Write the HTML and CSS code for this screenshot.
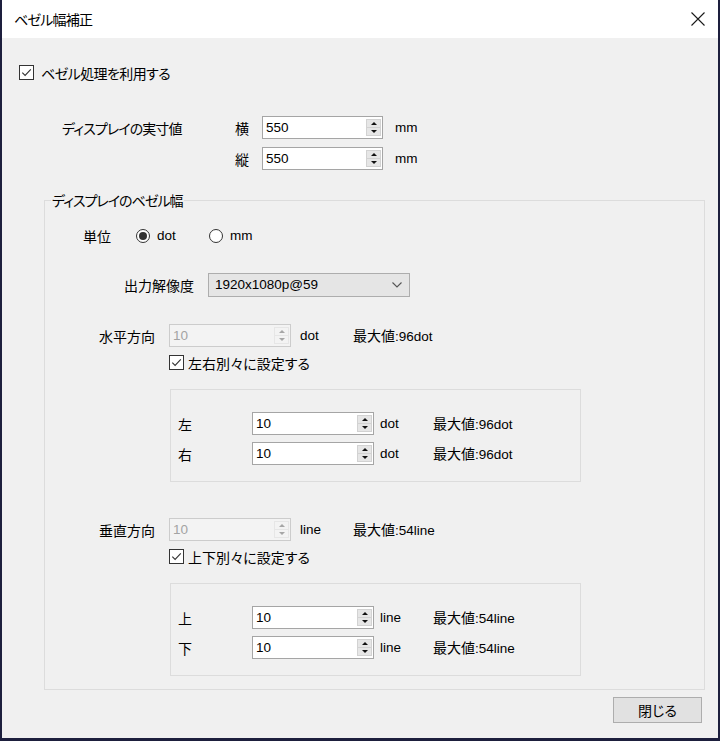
FILE: index.html
```html
<!DOCTYPE html>
<html lang="ja">
<head>
<meta charset="utf-8">
<title>ベゼル幅補正</title>
<link rel="stylesheet" href="styles.css">
</head>
<body>
<div class="window">
  <div class="titlebar">
    <span class="title">ベゼル幅補正</span>
    <svg class="close" width="14" height="14" viewBox="0 0 14 14"><path d="M0.5 0.5L13.5 13.5M13.5 0.5L0.5 13.5" stroke="#1a1a1a" stroke-width="1.1" fill="none"/></svg>
  </div>
  <div class="content">
    <div class="use-row">
      <span class="cb"><svg viewBox="0 0 13 13"><path d="M2.3 6.6L5.1 9.4L10.8 3.4" stroke="#333" stroke-width="1.1" fill="none"/></svg></span>
      <span class="kana-a">ベゼル処理を利用する</span>
    </div>

    <div class="real-size">
      <div class="rs-label">ディスプレイの実寸値</div>
      <div class="rs-fields">
        <div class="field-row">
          <span class="axis">横</span>
          <div class="spin w121"><span class="val">550</span><span class="spin-btns"><span class="up"></span><span class="down"></span></span></div>
          <span class="en unit-rs">mm</span>
        </div>
        <div class="field-row">
          <span class="axis">縦</span>
          <div class="spin w121"><span class="val">550</span><span class="spin-btns"><span class="up"></span><span class="down"></span></span></div>
          <span class="en unit-rs">mm</span>
        </div>
      </div>
    </div>

    <div class="group">
      <div class="legend">ディスプレイのベゼル幅</div>

      <div class="unit-row">
        <span class="unit-label">単位</span>
        <span class="radio-opt first"><span class="radio on"></span><span class="en">dot</span></span>
        <span class="radio-opt"><span class="radio"></span><span class="en">mm</span></span>
      </div>

      <div class="res-row">
        <span class="res-label">出力解像度</span>
        <div class="combo">
          <span class="en">1920x1080p@59</span>
          <svg width="10" height="6" viewBox="0 0 10 6"><path d="M0.5 0.5L5 5L9.5 0.5" stroke="#555" stroke-width="1.1" fill="none"/></svg>
        </div>
      </div>

      <div class="axis-row">
        <span class="axis-label">水平方向</span>
        <div class="spin w122 disabled"><span class="val">10</span><span class="spin-btns"><span class="up"></span><span class="down"></span></span></div>
        <span class="en unit-ax">dot</span>
        <span class="max">最大値<span class="en">:96dot</span></span>
      </div>

      <div class="sub-check">
        <span class="cb"><svg viewBox="0 0 13 13"><path d="M2.3 6.6L5.1 9.4L10.8 3.4" stroke="#333" stroke-width="1.1" fill="none"/></svg></span>
        <span>左右別々に設定する</span>
      </div>

      <div class="inner">
        <div class="inner-row">
          <span class="inner-label">左</span>
          <div class="spin w122"><span class="val">10</span><span class="spin-btns"><span class="up"></span><span class="down"></span></span></div>
          <span class="en unit-in">dot</span>
          <span class="max">最大値<span class="en">:96dot</span></span>
        </div>
        <div class="inner-row">
          <span class="inner-label">右</span>
          <div class="spin w122"><span class="val">10</span><span class="spin-btns"><span class="up"></span><span class="down"></span></span></div>
          <span class="en unit-in">dot</span>
          <span class="max">最大値<span class="en">:96dot</span></span>
        </div>
      </div>

      <div class="axis-row v">
        <span class="axis-label">垂直方向</span>
        <div class="spin w122 disabled"><span class="val">10</span><span class="spin-btns"><span class="up"></span><span class="down"></span></span></div>
        <span class="en unit-ax">line</span>
        <span class="max">最大値<span class="en">:54line</span></span>
      </div>

      <div class="sub-check">
        <span class="cb"><svg viewBox="0 0 13 13"><path d="M2.3 6.6L5.1 9.4L10.8 3.4" stroke="#333" stroke-width="1.1" fill="none"/></svg></span>
        <span>上下別々に設定する</span>
      </div>

      <div class="inner">
        <div class="inner-row">
          <span class="inner-label">上</span>
          <div class="spin w122"><span class="val">10</span><span class="spin-btns"><span class="up"></span><span class="down"></span></span></div>
          <span class="en unit-in">line</span>
          <span class="max">最大値<span class="en">:54line</span></span>
        </div>
        <div class="inner-row">
          <span class="inner-label">下</span>
          <div class="spin w122"><span class="val">10</span><span class="spin-btns"><span class="up"></span><span class="down"></span></span></div>
          <span class="en unit-in">line</span>
          <span class="max">最大値<span class="en">:54line</span></span>
        </div>
      </div>
    </div>

    <div class="footer">
      <button class="btn" type="button">閉じる</button>
    </div>
  </div>
</div>
</body>
</html>
```

FILE: styles.css
```css
html, body {
  margin: 0;
  padding: 0;
}
body {
  width: 720px;
  height: 741px;
  overflow: hidden;
  background: #1d1f3d;
  font-family: "Noto Sans CJK JP", sans-serif;
  font-size: 14px;
  font-feature-settings: "palt";
  color: #000;
  line-height: 1;
}
.en {
  font-family: "Liberation Sans", sans-serif;
  font-size: 13.5px;
  font-feature-settings: normal;
  letter-spacing: 0;
}
.window {
  margin-left: 2px;
  width: 716px;
  height: 738px;
  background: #f0f0f0;
  display: flex;
  flex-direction: column;
}
.titlebar {
  flex: none;
  height: 38px;
  background: #fff;
  display: flex;
  align-items: center;
  justify-content: space-between;
  padding: 0 13px 0 12px;
  box-sizing: border-box;
}
.title {
  font-size: 14px;
  letter-spacing: -0.8px;
  color: #000;
}
.content {
  display: flex;
  flex-direction: column;
}

/* checkbox */
.cb {
  flex: none;
  width: 15px;
  height: 15px;
  box-sizing: border-box;
  border: 1px solid #333;
  background: #fff;
  display: flex;
}
.cb svg {
  width: 13px;
  height: 13px;
}
.use-row {
  margin-top: 27px;
  height: 15px;
  padding-left: 17px;
  display: flex;
  align-items: center;
  gap: 7px;
}
.kana-a {
  letter-spacing: -0.6px;
}

/* real size */
.real-size {
  margin-top: 36px;
  display: flex;
  padding-left: 60px;
}
.rs-label {
  width: 173px;
  height: 23px;
  display: flex;
  align-items: center;
  letter-spacing: -0.9px;
}
.rs-fields {
  display: flex;
  flex-direction: column;
  gap: 8px;
}
.field-row {
  display: flex;
  align-items: center;
  height: 23px;
}
.axis {
  width: 27px;
}
.unit-rs {
  margin-left: 12px;
}

/* spin box */
.spin {
  flex: none;
  box-sizing: border-box;
  height: 23px;
  border: 1px solid #a5a5a5;
  background: #fff;
  display: flex;
  align-items: center;
  padding-left: 3px;
}
.w121 { width: 121px; }
.w122 { width: 122px; }
.spin .val {
  flex: 1;
  font-family: "Liberation Sans", sans-serif;
  font-size: 13.5px;
  font-feature-settings: normal;
}
.spin-btns {
  flex: none;
  width: 15px;
  height: 17px;
  margin-right: 1px;
  box-sizing: border-box;
  border: 1px solid #d2d2d2;
  background: #d2d2d2;
  display: flex;
  flex-direction: column;
  gap: 1px;
}
.spin-btns span {
  flex: 1;
  background: #e6e6e6;
  display: flex;
  align-items: center;
  justify-content: center;
}
.spin-btns .up::after {
  content: "";
  border-left: 3.5px solid transparent;
  border-right: 3.5px solid transparent;
  border-bottom: 3.5px solid #111;
}
.spin-btns .down::after {
  content: "";
  border-left: 3.5px solid transparent;
  border-right: 3.5px solid transparent;
  border-top: 3.5px solid #111;
}
.spin.disabled {
  background: #f3f3f3;
  border-color: #cccccc;
}
.spin.disabled .val {
  color: #a3a3a3;
}
.spin.disabled .spin-btns {
  border-color: #e6e6e6;
  background: #e6e6e6;
}
.spin.disabled .spin-btns span {
  background: #f3f3f3;
}
.spin.disabled .up::after {
  border-bottom-color: #a6a6a6;
}
.spin.disabled .down::after {
  border-top-color: #a6a6a6;
}

/* group */
.group {
  position: relative;
  margin-top: 30px;
  margin-left: 42px;
  width: 661px;
  height: 490px;
  box-sizing: border-box;
  border: 1px solid #dcdcdc;
  display: flex;
  flex-direction: column;
}
.legend {
  position: absolute;
  left: 6px;
  top: -11px;
  padding: 0 1px;
  background: #f0f0f0;
  line-height: 20px;
  letter-spacing: -1px;
}
.unit-row {
  margin-top: 25px;
  height: 20px;
  display: flex;
  align-items: center;
  padding-left: 38px;
}
.unit-label {
  width: 53px;
}
.radio-opt {
  display: flex;
  align-items: center;
  gap: 7px;
}
.radio-opt.first {
  width: 73px;
}
.radio {
  flex: none;
  width: 14px;
  height: 14px;
  box-sizing: border-box;
  border-radius: 50%;
  border: 1px solid #333;
  background: #fff;
  display: flex;
  align-items: center;
  justify-content: center;
}
.radio.on::after {
  content: "";
  width: 8px;
  height: 8px;
  border-radius: 50%;
  background: #333;
}

.res-row {
  margin-top: 27px;
  height: 24px;
  display: flex;
  align-items: center;
  padding-left: 79px;
}
.res-label {
  width: 84px;
}
.combo {
  width: 202px;
  height: 24px;
  box-sizing: border-box;
  border: 1px solid #adadad;
  background: #e5e5e5;
  display: flex;
  align-items: center;
  justify-content: space-between;
  padding: 0 7px 0 6px;
}

.axis-row {
  margin-top: 27px;
  height: 23px;
  display: flex;
  align-items: center;
  padding-left: 54px;
}
.axis-row.v {
  margin-top: 36px;
}
.axis-label {
  width: 70px;
}
.unit-ax {
  margin-left: 9px;
  width: 53px;
}
.sub-check {
  margin-top: 8px;
  height: 15px;
  padding-left: 124px;
  display: flex;
  align-items: center;
  gap: 4px;
}
.inner {
  margin-top: 19px;
  margin-left: 125px;
  width: 411px;
  height: 93px;
  box-sizing: border-box;
  border: 1px solid #dcdcdc;
  padding: 22px 0 0 7px;
  display: flex;
  flex-direction: column;
  gap: 7px;
}
.inner-row {
  display: flex;
  align-items: center;
  height: 23px;
}
.inner-label {
  width: 74px;
}
.unit-in {
  margin-left: 6px;
  width: 53px;
}

.footer {
  margin-top: 7px;
  display: flex;
  justify-content: flex-end;
  padding-right: 16px;
}
.btn {
  width: 89px;
  height: 26px;
  box-sizing: border-box;
  border: 1px solid #adadad;
  background: #e1e1e1;
  font-family: "Noto Sans CJK JP", sans-serif;
  font-size: 14px;
  font-feature-settings: "palt";
  color: #000;
  padding: 0;
  line-height: 1;
}
```
